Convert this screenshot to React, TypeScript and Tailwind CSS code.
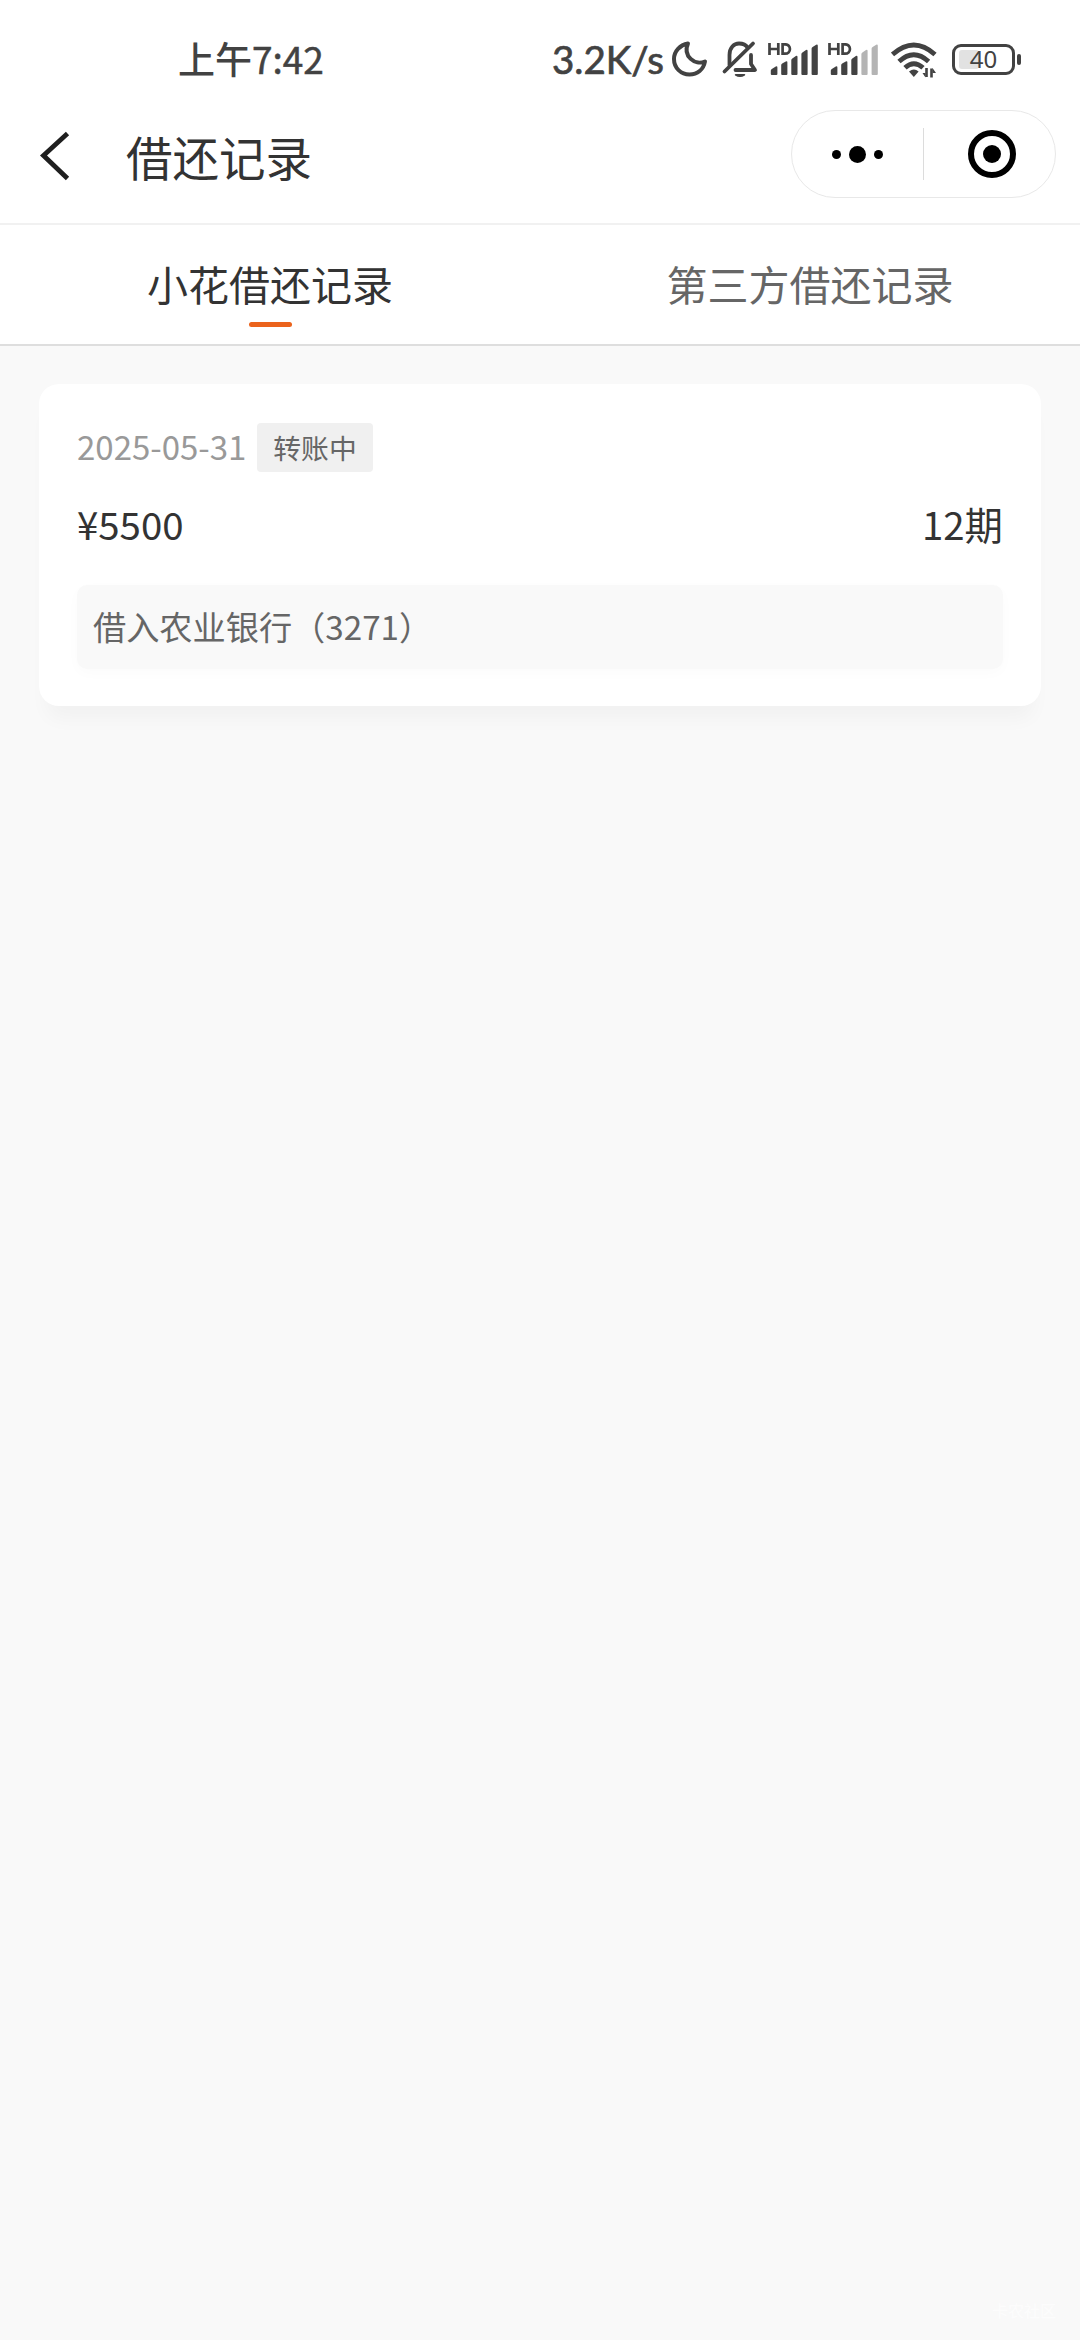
import React, { useState } from 'react';

interface LoanRecord {
  id: number;
  date: string;
  status: string;
  amount: string;
  periods: string;
  account: string;
}

const tabs = ['小花借还记录', '第三方借还记录'];

const records: LoanRecord[] = [
  {
    id: 1,
    date: '2025-05-31',
    status: '转账中',
    amount: '¥5500',
    periods: '12期',
    account: '借入农业银行（3271）',
  },
];

const SignalIcon: React.FC<{ level: number; className?: string }> = ({ level, className }) => (
  <svg className={className} width="52" height="36" viewBox="0 0 52 36" fill="#424242">
    <g fill="none" stroke="#424242" strokeWidth="2.7">
      <path d="M1.500 0v12M10.300 0v12M1.500 6h8.800" />
      <path d="M14.600 1.300v9.400h2.400c6.600 0 6.600-9.400 0-9.400z" />
    </g>
    {[
      'M2.800 31V27.500q0-1 1-1.600l4-2.400q1.600-.6 1.600 1V31q0 1-1 1H3.800q-1 0-1-1z',
      'M13.200 31V22q0-1 1-1.600l3.600-2q1.600-.6 1.600 1V31q0 1-1 1h-4.200q-1 0-1-1z',
      'M23.300 31V17q0-1 1-1.600l3.600-2.400q1.600-.6 1.600 1V31q0 1-1 1h-4.200q-1 0-1-1z',
      'M33.400 31V11q0-1 1-1.600l3.600-2.400q1.600-.6 1.600 1V31q0 1-1 1h-4.200q-1 0-1-1z',
      'M43.600 31V5.500q0-1 1-1.600l3.600-2.200q1.600-.6 1.600 1V31q0 1-1 1h-4.200q-1 0-1-1z',
    ].map((d, i) => (
      <path key={d} d={d} fill={i < level ? '#424242' : '#b4b4b4'} />
    ))}
  </svg>
);

const StatusBar = () => (
  <div className="flex h-[100px] items-center pl-[178px] pt-[18px] text-[#424242]">
    <span className="-mt-[2px] w-[374px] text-[37px] font-medium leading-[40px]">
      上午<span className="font-normal [-webkit-text-stroke:0.5px]">7:42</span>
    </span>
    <span className="w-[119px] shrink-0 whitespace-nowrap font-['Lato','Noto_Sans_CJK_SC',sans-serif] text-[38.5px] leading-[40px] [-webkit-text-stroke:0.7px]">
      3.2K/s
    </span>
    {/* do not disturb */}
    <svg className="shrink-0" width="38" height="38" viewBox="0 0 38 38" fill="none" stroke="#424242" strokeWidth="4" strokeLinejoin="round">
      <path d="M17 3.500C9 5 3 11 3 19c0 9 7 15.500 15.500 15.500 8 0 14-5 15.500-13C24 26 11.500 16 17 3.500z" />
    </svg>
    {/* muted */}
    <svg className="ml-[12px] shrink-0" width="38" height="38" viewBox="0 0 38 38" fill="none" stroke="#424242" strokeWidth="3.8" strokeLinejoin="round" strokeLinecap="round">
      <path d="M3.500 31.500 32 3.500" />
      <path d="M8.500 25v-10C8.500 7.500 13 3.500 18 3.500c4 0 7 1.500 8.500 4" />
      <path d="M30 15v9l4 6H14.500" />
      <path d="M14.500 34.800h9q-4.500 3-9 0z" fill="#424242" strokeWidth="1.500" />
    </svg>
    <SignalIcon level={5} className="ml-[9px] mt-[4px] shrink-0" />
    <SignalIcon level={3} className="ml-[8px] mt-[4px] shrink-0" />
    {/* wifi with traffic arrows */}
    <svg className="ml-[11px] mt-[2px] shrink-0" width="48" height="36" viewBox="0 0 48 36" fill="none" stroke="#424242" strokeWidth="4.800">
      <path d="M1.500 12.500Q22.800-6.500 44 12.500" />
      <path d="M8 19.500Q22.800 6 37.600 19.500" />
      <path d="M14 25.800Q22.800 17.500 32 25.800" />
      <path d="M18 29.500q5-4 9.600 0L22.800 35z" fill="#424242" stroke="none" />
      <path d="M35.500 26v9M40.500 35.500v-9" strokeWidth="2.600" />
      <path d="M31.500 31h3v4.500zM41.500 26v5h3.500z" fill="#424242" stroke="none" />
    </svg>
    <div className="ml-[13px] flex shrink-0 items-center">
      <div className="relative flex h-[31px] w-[63px] items-center justify-center rounded-[9px] border-[3px] border-[#424242]">
        <div className="absolute left-[4px] top-[3px] h-[19px] w-[20px] rounded-[3px] bg-[#e2e2e2]" />
        <span className="relative font-['Noto_Sans',sans-serif] text-[24px] leading-[24px]">40</span>
      </div>
      <div className="ml-[2px] h-[11px] w-[4px] rounded-[2px] bg-[#424242]" />
    </div>
  </div>
);

const Header = () => (
  <header className="flex h-[125px] items-start border-b-2 border-[#f1f1f1] pl-[38px] pr-[24px]">
    <button className="mt-[30px]" aria-label="返回">
      <svg width="34" height="52" viewBox="0 0 34 52" fill="none" stroke="#1f1f1f" strokeWidth="4.800">
        <path d="M29.500 3.500 5.500 25.500 29.500 48.500" />
      </svg>
    </button>
    <h1 className="ml-[54px] mt-[28px] text-[46.5px] leading-[56px] text-[#333]">借还记录</h1>
    <div className="ml-auto mt-[10px] flex h-[88px] w-[265px] items-center rounded-full border border-[#e8e8e8]">
      <button className="flex w-[131px] items-center justify-center gap-[8px]" aria-label="更多">
        <span className="size-[9px] rounded-full bg-black" />
        <span className="size-[17px] rounded-full bg-black" />
        <span className="size-[9px] rounded-full bg-black" />
      </button>
      <div className="h-[52px] w-px bg-[#dcdcdc]" />
      <button className="flex w-[131px] items-center justify-center pl-[5px]" aria-label="关闭">
        <span className="flex size-[48px] items-center justify-center rounded-full border-[6px] border-black">
          <span className="size-[18px] rounded-full bg-black" />
        </span>
      </button>
    </div>
  </header>
);

const RecordCard: React.FC<{ record: LoanRecord }> = ({ record }) => (
  <div className="h-[322px] rounded-[20px] bg-white px-[38px] pt-[39px] shadow-[0_20px_20px_-8px_rgba(0,0,0,0.035)]">
    <div className="flex h-[49px] items-center">
      <span className="-mt-[2px] w-[170px] text-[33px] leading-[49px] text-[#999]">{record.date}</span>
      <span className="ml-[10px] flex h-[49px] w-[116px] items-center justify-center rounded-[4px] bg-[#f0f0f0] text-[27.8px] leading-[49px] text-[#666]">
        {record.status}
      </span>
    </div>
    <div className="mt-[21px] flex h-[60px] items-center justify-between text-[38.4px] leading-[60px] text-[#333]">
      <span>{record.amount}</span>
      <span>{record.periods}</span>
    </div>
    <div className="mt-[32px] flex h-[84px] items-center rounded-[10px] bg-[#f9f9f9] pb-[3px] pl-[16px] text-[33.2px] text-[#666] shadow-[0_4px_14px_rgba(0,0,0,0.02)]">
      {record.account}
    </div>
  </div>
);

const App: React.FC = () => {
  const [activeTab, setActiveTab] = useState(0);

  return (
    <div className="relative flex h-[2340px] w-[1080px] flex-col bg-[#f9f9f9] font-['Noto_Sans_CJK_SC',sans-serif]">
      <div className="bg-white">
        <StatusBar />
        <Header />
        <nav className="grid h-[121px] grid-cols-2 border-b-2 border-[#dedede]">
          {tabs.map((tab, i) => (
            <button
              key={tab}
              onClick={() => setActiveTab(i)}
              className={`flex flex-col items-center pt-[28px] text-[41px] leading-[60px] ${
                i === activeTab ? 'text-[#333]' : 'text-[#666]'
              }`}
            >
              {tab}
              {i === activeTab && <span className="mt-[9px] h-[5px] w-[43px] rounded-full bg-[#eb631c]" />}
            </button>
          ))}
        </nav>
      </div>

      <main className="flex-1 px-[39px] pt-[38px]">
        {activeTab === 0 && records.map((record) => <RecordCard key={record.id} record={record} />)}
      </main>

      {/* Watermark */}
      <div className="absolute bottom-[20px] right-[24px] text-[16px] leading-[20px] text-white/60">卡农社区</div>
    </div>
  );
};

export default App;
